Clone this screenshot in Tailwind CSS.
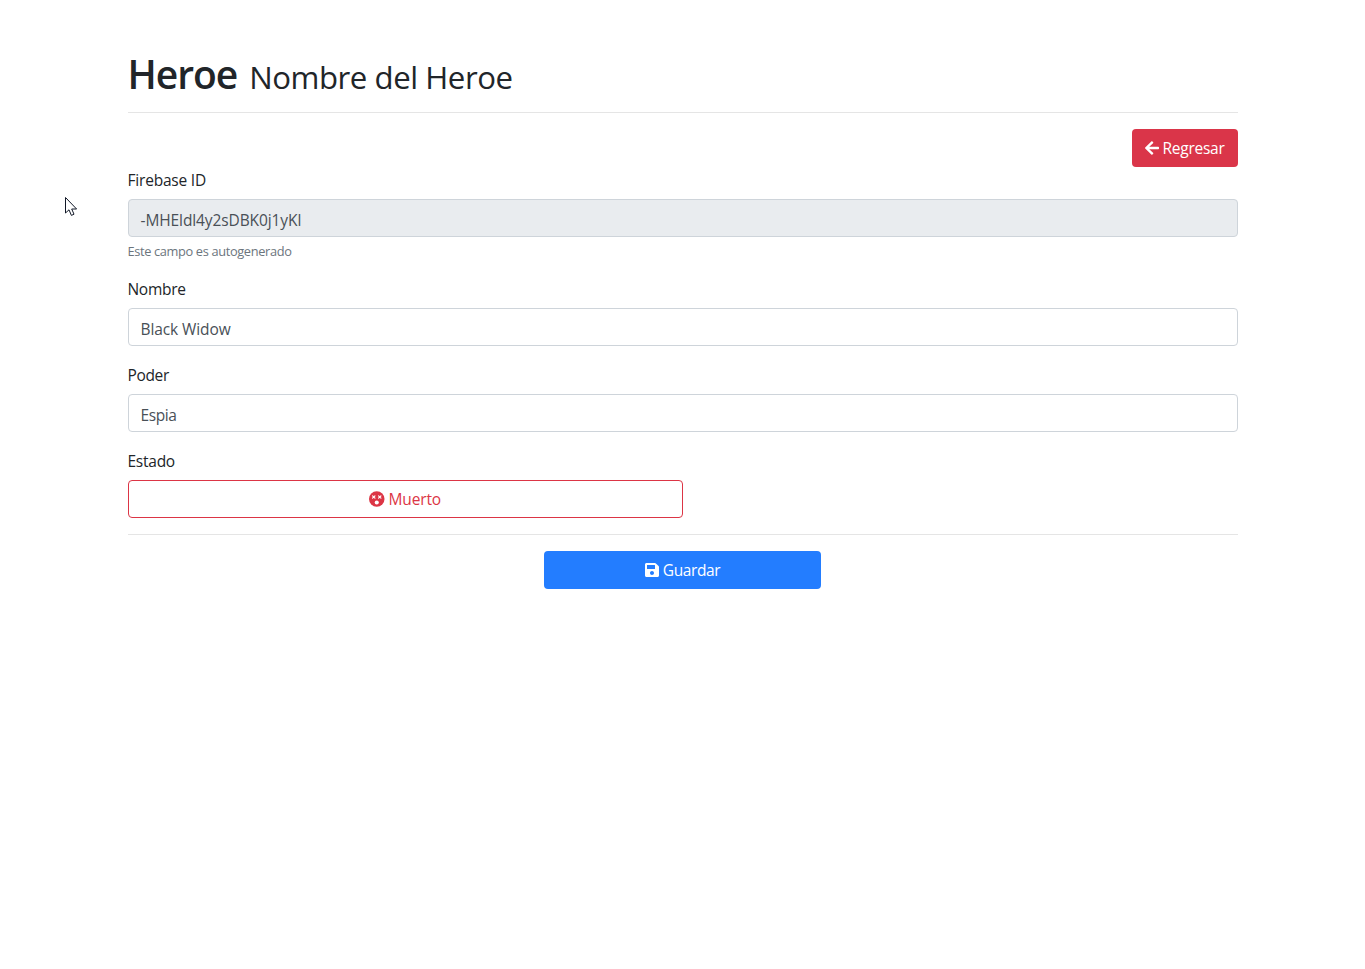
<!DOCTYPE html>
<html lang="es">
<head>
<meta charset="utf-8">
<title>Heroe</title>
<script src="https://cdn.jsdelivr.net/npm/@tailwindcss/browser@4"></script>
</head>
<body class="bg-white font-['Open_Sans','Noto_Sans',sans-serif] text-[15.5px] text-[#212529]">
<main class="mx-auto w-[1110px] pt-12">
  <h1 class="flex h-12 items-baseline whitespace-nowrap text-[39px] leading-[51px] font-semibold"><span class="tracking-[-1.05px]">Heroe</span><small class="ml-3 text-[31.2px] font-normal tracking-[-0.45px]">Nombre del Heroe</small></h1>
  <hr class="my-4 border-[#e5e5e5]">
  <div class="flex justify-end">
    <button class="flex h-[38px] w-[106px] items-center rounded bg-[#da3549] pl-[13px] text-white">
      <svg class="h-4 w-3.5" viewBox="0 0 448 512" fill="currentColor"><path d="M257.5 445.1l-22.2 22.2c-9.4 9.4-24.6 9.4-33.9 0L7 273c-9.4-9.4-9.4-24.6 0-33.9L201.4 44.7c9.4-9.4 24.6-9.4 33.9 0l22.2 22.2c9.5 9.5 9.3 25-.4 34.3L136.6 216H424c13.3 0 24 10.7 24 24v32c0 13.3-10.7 24-24 24H136.6l120.5 114.8c9.8 9.3 10 24.8.4 34.3z"/></svg>
      <span class="ml-1 pt-0.5 tracking-[-0.25px]">Regresar</span>
    </button>
  </div>
  <form>
    <div class="mb-[15px]">
      <label class="mb-2 block h-6 leading-[26px]"><span class="tracking-[-0.2px]">Firebase ID</span></label>
      <div class="h-[38px] rounded border border-[#ced4da] bg-[#e9ecef] px-3 leading-[40px] text-[#495057]"><span class="tracking-[-0.1px]">-MHEldl4y2sDBK0j1yKl</span></div>
      <small class="mt-1 block h-5 text-[12.8px] leading-5 text-[#6c757d]"><span class="tracking-[-0.35px]">Este campo es autogenerado</span></small>
    </div>
    <div class="mb-4">
      <label class="mb-2 block h-6 leading-[26px]"><span class="tracking-[-0.3px]">Nombre</span></label>
      <div class="h-[38px] rounded border border-[#ced4da] px-3 leading-[40px] text-[#495057]"><span class="tracking-[-0.1px]">Black Widow</span></div>
    </div>
    <div class="mb-4">
      <label class="mb-2 block h-6 leading-[26px]"><span class="tracking-[-0.35px]">Poder</span></label>
      <div class="h-[38px] rounded border border-[#ced4da] px-3 leading-[40px] text-[#495057]"><span class="tracking-[-0.4px]">Espia</span></div>
    </div>
    <div>
      <label class="mb-2 block h-6 leading-[26px]"><span class="tracking-[-0.25px]">Estado</span></label>
      <button type="button" class="flex h-[38px] w-[555px] items-center justify-center rounded border border-[#dc3545] text-[#dc3545]">
        <svg class="h-4 w-[15.5px]" viewBox="0 0 496 512"><circle cx="248" cy="256" r="248" fill="currentColor"/><g stroke="#fff" stroke-width="38" stroke-linecap="round"><path d="M114 154l76 76M190 154l-76 76M306 154l76 76M382 154l-76 76"/></g><circle cx="248" cy="368" r="66" fill="#fff"/></svg>
        <span class="ml-1 pt-0.5 tracking-[-0.15px]">Muerto</span>
      </button>
    </div>
    <hr class="my-4 border-[#e5e5e5]">
    <div class="flex justify-center">
      <button type="button" class="flex h-[38px] w-[277px] items-center justify-center rounded bg-[#237dff] text-white">
        <svg class="h-4 w-3.5" viewBox="0 0 448 512" fill="currentColor"><path d="M433.941 129.941l-83.882-83.882A48 48 0 0 0 316.118 32H48C21.49 32 0 53.49 0 80v352c0 26.51 21.49 48 48 48h352c26.51 0 48-21.49 48-48V163.882a48 48 0 0 0-14.059-33.941zM224 416c-35.346 0-64-28.654-64-64 0-35.346 28.654-64 64-64s64 28.654 64 64c0 35.346-28.654 64-64 64zm96-304.52V212c0 6.627-5.373 12-12 12H76c-6.627 0-12-5.373-12-12V108c0-6.627 5.373-12 12-12h228.52c3.183 0 6.235 1.264 8.485 3.515l3.48 3.48A11.996 11.996 0 0 1 320 111.48z"/></svg>
        <span class="ml-1 pt-0.5 tracking-[-0.4px]">Guardar</span>
      </button>
    </div>
  </form>
</main>
<svg class="absolute top-[197px] left-[65px] h-5 w-3" viewBox="0 0 12 20"><path d="M.5 .5V16L4 12.8L6.4 18.4L9 17.2L6.7 12H11.6Z" fill="#fff" stroke="#111827" stroke-width="1"/></svg>
</body>
</html>
